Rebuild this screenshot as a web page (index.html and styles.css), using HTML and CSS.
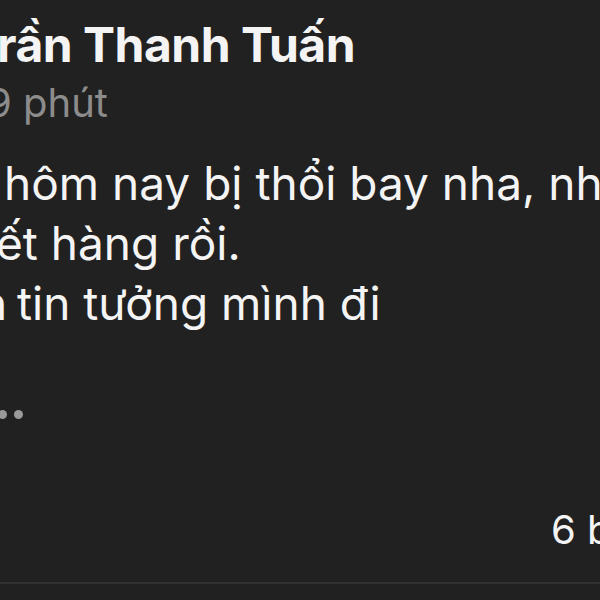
FILE: index.html
```html
<!DOCTYPE html>
<html lang="vi">

<head>
    <meta charset="UTF-8">
    <meta name="viewport" content="width=device-width, initial-scale=1.0">
    <title>Bài viết</title>
    <link rel="stylesheet" href="styles.css">
</head>

<body>
    <div class="post">
        <div class="post-head">
            <div class="line author"><span class="cut">T</span><span>rần Thanh Tuấn</span></div>
            <div class="line time"><span class="cut">1</span><span>9 phút</span></div>
        </div>

        <div class="post-body">
            <div class="line line-1"><span class="cut">Hàng </span><span>hôm nay bị thổi bay nha, nhớ đặt sớm</span></div>
            <div class="line line-2"><span class="cut">H</span><span>ết hàng rồi.</span></div>
            <div class="line line-3"><span class="cut">Các bạn </span><span>tin tưởng mình đi</span></div>
        </div>

        <div class="more">
            <span class="dot"></span>
            <span class="dot"></span>
            <span class="dot"></span>
        </div>

        <div class="post-foot">
            <span class="comments">6 bình luận</span>
        </div>

        <div class="divider"></div>
    </div>
</body>

</html>
```

FILE: styles.css
```css
:root {
    --bg-color: #212121;
    --text-color: #f4f4f4;
    --muted-color: #8c8c8c;
    --dot-color: #9a9a9a;
    --line-color: #313131;
}

* {
    margin: 0;
    padding: 0;
    box-sizing: border-box;
}

body {
    width: 600px;
    height: 600px;
    overflow: hidden;
    background-color: var(--bg-color);
    color: var(--text-color);
    font-family: 'Inter', 'Noto Sans', sans-serif;
}

.post {
    display: flex;
    flex-direction: column;
}

/* each line starts where the visible part begins; the cut part hangs off to the left */
.line {
    display: flex;
    white-space: pre;
}

.cut {
    width: 0;
    display: flex;
    justify-content: flex-end;
}

.post-head {
    padding-top: 17px;
}

.author {
    margin-left: -3px;
    font-size: 48px;
    font-weight: 700;
    line-height: 56px;
    letter-spacing: -0.5px;
}

.time {
    margin-top: 6px;
    margin-left: -13px;
    font-size: 40px;
    line-height: 48px;
    color: var(--muted-color);
}

.post-body {
    margin-top: 26px;
    font-size: 46px;
    line-height: 60px;
}

.line-1 {
    margin-left: 4px;
}

.line-2 {
    margin-left: -4px;
}

.line-3 {
    margin-left: 17px;
}

.line-3 .cut {
    word-spacing: -3px;
}

.more {
    display: flex;
    gap: 7px;
    margin-top: 77px;
    margin-left: -18px;
}

.dot {
    width: 9px;
    height: 9px;
    border-radius: 50%;
    background-color: var(--dot-color);
}

.post-foot {
    display: flex;
    margin-top: 87px;
    padding-left: 551px;
    white-space: nowrap;
}

.comments {
    font-size: 40px;
    line-height: 48px;
}

.divider {
    height: 2px;
    margin-top: 28px;
    background-color: var(--line-color);
}
```
